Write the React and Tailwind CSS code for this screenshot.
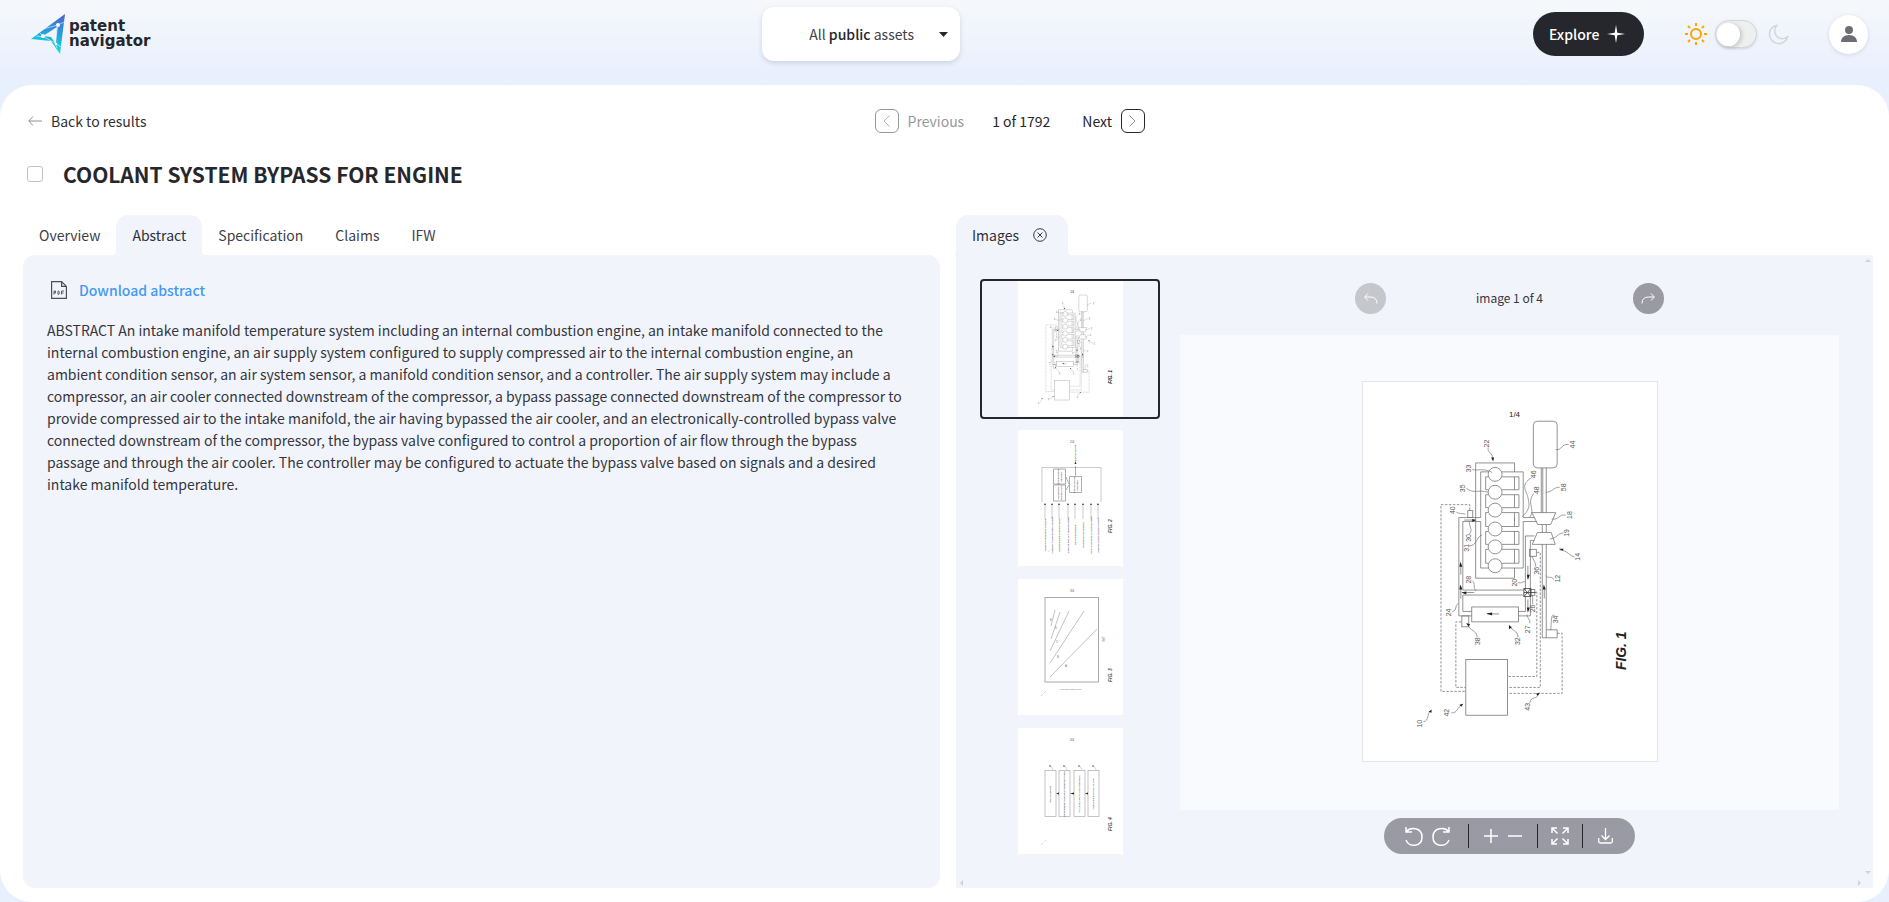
import React, { useState } from "react";

const TABS = ["Overview", "Abstract", "Specification", "Claims", "IFW"];

const ABSTRACT =
  "ABSTRACT An intake manifold temperature system including an internal combustion engine, an intake manifold connected to the internal combustion engine, an air supply system configured to supply compressed air to the internal combustion engine, an ambient condition sensor, an air system sensor, a manifold condition sensor, and a controller. The air supply system may include a compressor, an air cooler connected downstream of the compressor, a bypass passage connected downstream of the compressor to provide compressed air to the intake manifold, the air having bypassed the air cooler, and an electronically-controlled bypass valve connected downstream of the compressor, the bypass valve configured to control a proportion of air flow through the bypass passage and through the air cooler. The controller may be configured to actuate the bypass valve based on signals and a desired intake manifold temperature.";

const CYLINDERS = [93, 111, 129, 148, 166, 185];

// [text, x, y] of the reference numerals in figure 1
const NUMERALS = [
  ["22", 125, 62], ["33", 107, 87], ["35", 101, 107], ["40", 91, 129],
  ["30", 107, 157], ["31", 105, 167], ["46", 172, 93], ["48", 175, 109],
  ["44", 211, 63], ["58", 202, 106], ["18", 208, 134], ["19", 205, 152],
  ["14", 216, 176], ["28", 107, 199], ["24", 87, 232], ["38", 116, 261],
  ["32", 156, 261], ["20", 153, 202], ["36", 175, 190], ["26", 171, 228],
  ["27", 166, 249], ["12", 196, 198], ["34", 194, 239], ["42", 85, 333],
  ["10", 57, 344], ["43", 166, 327],
];

// Curved leader lines between the numerals and the parts
const LEADERS =
  "M126 66c-1 5 4 5 5 11M110 88c5 2 10-2 20 3M104 107c8 6 12 1 22 4M94 131c3 2 5 1 9 2M107 153c4-4 0-7 0-12M107 165c8 0 7-10 13-11M170 96c-12 8-6 12-4 20c2 9 2 12-6 20M172 112c-8 10 2 16-4 24M207 63c-8-1-6 6-13 5M198 106c-7 0-7 5-14 5M204 134c-7-1-6 5-14 4M202 152c-6 0-7 6-14 6M213 176c-6-1-6-6-15-7M110 200c4 3 0 8 4 10M90 231c5-1 2-6 6-8M115 257c-1-8-7-5-10-14M156 257c0-7-6-6-9-12M156 202c4 1 4-1 7-1M174 186c0-4-2-6-4-11M171 224c-1-4 1-6-1-10M168 243c1-4-3-5-3-9M192 199c-3-5-5 0-8-4M193 235c-4-2-3 5-4 15M89 333c6 1 6-6 11-8M61 342c6-1 3-9 8-12M168 323c1-7 7-3 9-9";

const ARROWS =
  "M131 80l-2-4h3zM114 139l-4-1v3zM98 181l-1 5h3zM98 204l-1 5h3zM99 212l5-1v3zM124 233l6-1v3zM166 199l-1-5h3zM166 232l-1-5h3zM182 204l-1 5h3zM197 168l5 0l-1 2zM104 243l4 1l-2 2zM147 245l3 2l-3 2zM101 324l-4 1l2 2zM69 330l-3 2l3 1zM178 313l-4 1l2 2z";

function FigureOne({ className }) {
  return (
    <svg viewBox="0 0 296 382" className={className} role="img" aria-label="Figure 1">
      <rect width="296" height="382" fill="#fff" />
      <g fill="none" stroke="#777" strokeWidth="0.8">
        <rect x="171.5" y="39.5" width="24" height="47" rx="4" />
        <path d="M179.5 86.5v45M181 86.5v45M184.5 86.5v45M170 131.5h24l-5 12h-13zM180.5 143.5v8M184.5 143.5v8M175.5 151.5h14l4 12h-23zM180.5 163.5v94h4v-94M184.5 249.5h11v8h-11" />
        <rect x="113.5" y="81.5" width="39" height="116" />
        {/* intake and exhaust manifolds */}
        <path fill="#fff" d="M118.5 136.5v-46h42.8v46h11M118.5 140.5v46.8h42.8v-46.8h14" />
        {CYLINDERS.slice(0, -1).map((y, i) => (
          <path
            key={y}
            d={`M126 ${y + 2.5}h-2.5V${CYLINDERS[i + 1] - 2.5}h2.5M140 ${y + 2.5}h17V${CYLINDERS[i + 1] - 2.5}h-17M152.5 ${y + 2.5}V${CYLINDERS[i + 1] - 2.5}`}
          />
        ))}
        {CYLINDERS.map((y) => (
          <circle key={y} cx="133" cy={y} r="7" fill="#fff" />
        ))}
        <path d="M118.5 136.5h-22v99h13M118.5 140.5h-18v69h61M109.5 231h-9v-16.5h61M156.5 231h7v-15M156.5 235.5h12v-76h4M163.5 209v-54h9" />
        <rect x="109.5" y="226.5" width="47" height="15" />
        <rect x="105.5" y="129.5" width="5" height="7" />
        <rect x="167.5" y="168.5" width="7" height="7" />
        <rect x="99.5" y="235.5" width="7" height="11" />
        <rect x="103.5" y="279.5" width="42" height="56" />
        <rect x="169" y="209" width="4" height="6" />
        <path d="M162 208h7v8h-7zM162 208l7 8M169 208l-7 8M162 212h12" stroke="#333" />
        <path d="M98.5 194v-11M98.5 218v-12M112 212h-12M137 233.5h-12M166 185v13M166 219v12M182.5 218v-12M102 139h10" />
        <path
          strokeDasharray="2.5 1.5"
          d="M107.5 129v-5.5h-29v188h25M99 241.5h-5.5v66h10M174 211.5h1v85h-29M175 171.5h3.5v136h-33M195.5 253h5v60.5h-55"
        />
        <path d={LEADERS} strokeWidth="0.7" />
      </g>
      <path d={ARROWS} fill="#222" />
      <g fill="#555" fontSize="7" textAnchor="middle" className="font-['Liberation_Sans',sans-serif]">
        {NUMERALS.map(([n, x, y]) => (
          <text key={n} transform={`translate(${x + 2} ${y}) rotate(-90)`}>
            {n}
          </text>
        ))}
      </g>
      <g fill="#222" className="font-['Liberation_Sans',sans-serif]">
        <text x="147" y="35" fontSize="8">1/4</text>
        <text transform="translate(265 290) rotate(-90)" fontSize="14" fontWeight="bold" fontStyle="italic">
          FIG. 1
        </text>
      </g>
    </svg>
  );
}

function SheetLabels({ page }) {
  return (
    <g fill="#555" className="font-['Liberation_Sans',sans-serif]">
      <text x="52" y="13" fontSize="3">{page}/4</text>
      <text transform="translate(94 103) rotate(-90)" fontSize="5" fontWeight="bold" fontStyle="italic">
        FIG. {page}
      </text>
    </g>
  );
}

const INPUTS = [
  [27, "AMBIENT PRESSURE SENSOR"],
  [34, "AMBIENT TEMPERATURE SENSOR"],
  [41, "COMPRESSOR TEMPERATURE"],
  [50, "COOLER OUTLET TEMPERATURE"],
  [57, "AIR FLOW SENSOR"],
  [65, "MANIFOLD AIR SENSOR"],
  [73, "INTAKE MANIFOLD TEMPERATURE"],
  [80, "ENGINE SPEED SENSOR INPUTS"],
];

function FigureTwo({ className }) {
  return (
    <svg viewBox="0 0 105 136" className={className} role="img" aria-label="Figure 2">
      <rect width="105" height="136" fill="#fff" />
      <g fill="none" stroke="#aaa" strokeWidth="0.6">
        <path d="M24 37.5h59M24 37v35M83 37v35" />
        <path d="M35.5 39h12v15h-12zM35.5 55h12v16h-12zM51.5 46.5h12v16h-12zM57.5 46v-10M48 47l3 7M48 60l3-5" stroke="#777" />
        {INPUTS.map(([x]) => (
          <path key={x} d={`M${x} 89v-15`} />
        ))}
        <path d="M30 122l3-3" strokeDasharray="1 1" />
      </g>
      <path d="M57.5 31l-1 3h2z" fill="#333" />
      {INPUTS.map(([x]) => (
        <path key={x} d={`M${x} 73l-1 2h2z`} fill="#333" />
      ))}
      <g fill="#555" fontSize="2.2" textAnchor="middle" className="font-['Liberation_Sans',sans-serif] font-bold">
        {INPUTS.map(([x, label]) => (
          <text key={x} transform={`translate(${x + 1} 105) rotate(-90)`}>{label}</text>
        ))}
        <text transform="translate(58 23) rotate(-90)">BYPASS VALVE</text>
        <text transform="translate(41 47) rotate(-90)">TEMPERATURE</text>
        <text transform="translate(44 47) rotate(-90)">DESIRED</text>
        <text transform="translate(41 63) rotate(-90)">CONDITION</text>
        <text transform="translate(44 63) rotate(-90)">SENSOR MAP</text>
        <text transform="translate(57 55) rotate(-90)">BYPASS VALVE</text>
        <text transform="translate(60 55) rotate(-90)">CONTROL</text>
      </g>
      <SheetLabels page={2} />
    </svg>
  );
}

function FigureThree({ className }) {
  return (
    <svg viewBox="0 0 105 136" className={className} role="img" aria-label="Figure 3">
      <rect width="105" height="136" fill="#fff" />
      <rect x="27" y="18.5" width="53.5" height="84.5" fill="none" stroke="#aaa" />
      <g fill="none" stroke="#999" strokeWidth="0.6">
        <path d="M32 98l47-48M32 84l34-52M32 72l19-40M33 60l9-27M33 47l4-16" />
        <path d="M23 117l5-5" strokeDasharray="1 1" />
      </g>
      <g fill="#777" fontSize="3" textAnchor="middle" className="font-['Liberation_Sans',sans-serif]">
        <text x="53" y="111" fontSize="2">ENGINE SPEED (RPM)</text>
        <text transform="translate(87 60) rotate(-90)">IMT</text>
        <text x="48" y="88">A</text>
        <text x="40" y="79">B</text>
        <text x="39" y="64">C</text>
        <text x="38" y="50">D</text>
        <text x="33" y="42">E</text>
      </g>
      <SheetLabels page={3} />
    </svg>
  );
}

const STEPS = [
  [27, "READ INPUTS"],
  [41, "DETERMINE DESIRED TEMPERATURE"],
  [56, "CALCULATE VALVE POSITION"],
  [70, "ACTUATE BYPASS VALVE"],
];

function FigureFour({ className }) {
  return (
    <svg viewBox="0 0 105 126" className={className} role="img" aria-label="Figure 4">
      <rect width="105" height="126" fill="#fff" />
      {STEPS.map(([x, label]) => (
        <g key={x} className="font-['Liberation_Sans',sans-serif] font-bold">
          <rect x={x} y="42.5" width="11" height="46" fill="none" stroke="#aaa" strokeWidth="0.7" />
          <path d={`M${x + 8} 42l-2-4`} stroke="#aaa" strokeWidth="0.5" />
          <circle cx={x + 5} cy="38" r="0.9" fill="#888" />
          <text transform={`translate(${x + 6} 66) rotate(-90)`} fontSize="2.5" textAnchor="middle" fill="#555">
            {label}
          </text>
        </g>
      ))}
      <path d="M38 65.5l3-1v2zM52 65.5l4-1v2zM67 65.5l3-1v2z" fill="#222" />
      <path d="M23 117l5-5" stroke="#999" strokeWidth="0.5" strokeDasharray="1 1" />
      <SheetLabels page={4} />
    </svg>
  );
}

const FIGURES = [FigureOne, FigureTwo, FigureThree, FigureFour];

function Logo() {
  return (
    <a href="#" className="flex items-center w-[158px] gap-1">
      <svg width="34" height="40" viewBox="0 0 34 40" aria-hidden="true">
        <defs>
          <linearGradient id="logo" x1="0.8" y1="0" x2="0.6" y2="1">
            <stop offset="0" stopColor="#4f62cf" />
            <stop offset="0.45" stopColor="#2c9ad8" />
            <stop offset="1" stopColor="#08ecdf" />
          </linearGradient>
        </defs>
        <path fill="url(#logo)" fillRule="evenodd" d="M34 0L0 25l20 2l9 13zM26 13l-1 17l-5-7l-8-1z" />
        <path d="M5 22l8 1l11 6l2 5M12 15l15-4l6-3M27 11l-3 18M24 29l6 4M12 22L9 19" fill="none" stroke="#fff" strokeWidth="0.7" opacity="0.8" />
        <circle cx="27" cy="11" r="2" fill="#fff" />
        <circle cx="12" cy="22" r="2" fill="#fff" />
        <circle cx="25" cy="30" r="1.3" fill="#fff" />
      </svg>
      <span className="font-['DejaVu_Sans',sans-serif] font-bold text-[15px] leading-[15px] text-[#26272c]">
        patent
        <br />
        navigator
      </span>
    </a>
  );
}

function ThemeSwitch() {
  const [dark, setDark] = useState(false);
  return (
    <label className="flex items-center cursor-pointer">
      <svg width="22" height="22" viewBox="0 0 22 22" fill="none" stroke="#ffa500" strokeWidth="2" aria-hidden="true">
        <circle cx="11" cy="11" r="5" />
        <path d="M11 0v3M11 19v3M0 11h3M19 11h3M3 3l2 2M17 17l2 2M3 19l2-2M17 5l2-2" />
      </svg>
      <input
        type="checkbox"
        role="switch"
        aria-label="Dark theme"
        className="peer sr-only"
        checked={dark}
        onChange={(e) => setDark(e.target.checked)}
      />
      <span className="ml-2 mr-[11px] flex items-center w-[42px] h-7 rounded-full border border-[#d5d6da] bg-[#eeefef] px-px shadow-sm peer-checked:justify-end">
        <span className="size-[23px] rounded-full bg-white shadow-[2px_1px_4px_rgba(0,0,0,0.18)]" />
      </span>
      <svg width="21" height="21" viewBox="0 0 21 21" fill="none" stroke="#d3d5dd" strokeWidth="1.5" aria-hidden="true">
        <path d="M9 1.2A9.3 9.3 0 1 0 19.8 12.5A7.3 7.3 0 0 1 9 1.2z" strokeLinejoin="round" />
      </svg>
    </label>
  );
}

function Header() {
  return (
    <header className="flex items-start justify-between h-[85px] pl-[31px] pr-[21px]">
      <div className="pt-[14px]">
        <Logo />
      </div>
      <button className="mt-[7px] flex items-center justify-end w-[198px] h-[54px] rounded-xl bg-white pr-3 shadow-[0_2px_5px_rgba(60,70,100,0.18)] cursor-pointer text-[#404148]">
        <span>
          All <b className="font-medium text-[#26272c]">public</b> assets
        </span>
        <svg className="ml-[25px]" width="9" height="5" viewBox="0 0 9 5" aria-hidden="true">
          <path d="M0 0h9L4.5 5z" fill="#26272c" />
        </svg>
      </button>
      <div className="flex items-center pt-3">
        <button className="flex items-center gap-2 h-11 w-[111px] pl-4 rounded-full bg-[#26272c] text-white font-medium cursor-pointer">
          Explore
          <svg width="18" height="18" viewBox="0 0 20 20" aria-hidden="true">
            <path d="M10 0l1.5 8.5L20 10l-8.5 1.5L10 20l-1.5-8.5L0 10l8.5-1.5z" fill="#fff" />
          </svg>
        </button>
        <div className="ml-[41px] mr-10">
          <ThemeSwitch />
        </div>
        <button
          aria-label="Account"
          className="flex items-center justify-center size-[39px] rounded-full bg-white shadow-[0_1px_4px_rgba(60,70,100,0.15)] cursor-pointer"
        >
          <svg width="16" height="17" viewBox="0 0 16 17" fill="#6c6d75" aria-hidden="true">
            <circle cx="8" cy="4" r="4" />
            <path d="M0 16c0-4 3-7 8-7s8 3 8 7z" />
          </svg>
        </button>
      </div>
    </header>
  );
}

function Pager() {
  return (
    <nav className="flex items-center mx-auto text-[#26272c]">
      <button disabled className="flex items-center gap-[9px] text-[#97989c]">
        <span className="flex items-center justify-center size-6 rounded-md border border-[#97989c]">
          <svg width="7" height="12" viewBox="0 0 7 12" fill="none" stroke="#b5b6ba" aria-hidden="true">
            <path d="M6.5 0.5L1 6l5.5 5.5" />
          </svg>
        </span>
        Previous
      </button>
      <span className="ml-7 mr-8">1 of 1792</span>
      <button className="flex items-center gap-[9px] cursor-pointer">
        Next
        <span className="flex items-center justify-center size-6 rounded-md border border-[#26272c]">
          <svg width="7" height="12" viewBox="0 0 7 12" fill="none" stroke="#8d8e95" aria-hidden="true">
            <path d="M0.5 0.5L6 6L0.5 11.5" />
          </svg>
        </span>
      </button>
    </nav>
  );
}

function PdfIcon() {
  return (
    <svg width="16" height="18" viewBox="0 0 16 18" fill="none" stroke="#4d4e55" strokeWidth="1.2" aria-hidden="true">
      <path d="M0.6 0.6h10l4.8 4.8v12H0.6zM10.6 0.6v4.8h4.8" />
      <path d="M3 13.5v-3.5h1.5v2H3M7 10v3.5c2 0 2-3.5 0-3.5M10.5 13.5V10h2.5M10.5 12h2" strokeWidth="0.9" />
    </svg>
  );
}

// Small curves where the open tab runs into its panel
function TabFlares() {
  return (
    <>
      <svg className="absolute bottom-0 -left-1" width="4" height="4" fill="#f1f4fb" aria-hidden="true">
        <path d="M4 0v4H0q4 0 4-4z" />
      </svg>
      <svg className="absolute bottom-0 -right-1" width="4" height="4" fill="#f1f4fb" aria-hidden="true">
        <path d="M0 0v4h4Q0 4 0 0z" />
      </svg>
    </>
  );
}

function AbstractPanel() {
  const [active, setActive] = useState("Abstract");
  return (
    <section className="flex flex-col flex-1 min-w-0">
      <div role="tablist" className="flex">
        {TABS.map((tab) => (
          <button
            key={tab}
            role="tab"
            aria-selected={tab === active}
            onClick={() => setActive(tab)}
            className={
              tab === active
                ? "relative h-10 px-4 rounded-t-xl bg-[#f1f4fb] text-[#303138] cursor-pointer"
                : "h-10 px-4 text-[#404148] cursor-pointer"
            }
          >
            {tab}
            {tab === active && <TabFlares />}
          </button>
        ))}
      </div>
      <div className="flex-1 rounded-xl bg-[#f1f4fb] pt-6 pl-6 pr-8">
        <a href="#" className="flex items-center gap-3 pl-1 font-medium text-[#4499f5]">
          <PdfIcon />
          Download abstract
        </a>
        <p className="mt-[18px] text-[#36373e]">{ABSTRACT}</p>
      </div>
    </section>
  );
}

function Toolbar() {
  const divider = <span className="w-px h-6 bg-[#26272c]" />;
  return (
    <div className="mt-2 mx-auto flex items-center h-9 rounded-full bg-[#9a9aa4] pl-[21px] pr-[22px]">
      <button aria-label="Rotate left" className="cursor-pointer">
        <svg width="18" height="21" viewBox="0 0 18 21" fill="none" stroke="#fff" strokeWidth="1.5" aria-hidden="true">
          <path d="M1 1v5h6M1.5 5.5C5 1 17 1 17 11c0 10-13 11-16 3" />
        </svg>
      </button>
      <button aria-label="Rotate right" className="ml-[9px] mr-[18px] cursor-pointer">
        <svg width="18" height="21" viewBox="0 0 18 21" fill="none" stroke="#fff" strokeWidth="1.5" aria-hidden="true">
          <path d="M17 1v5h-6M16.5 5.5C13 1 1 1 1 11c0 10 13 11 16 3" />
        </svg>
      </button>
      {divider}
      <button aria-label="Zoom in" className="ml-[15px] mr-[10px] cursor-pointer">
        <svg width="14" height="14" viewBox="0 0 14 14" stroke="#fff" strokeWidth="1.5" aria-hidden="true">
          <path d="M7 0v14M0 7h14" />
        </svg>
      </button>
      <button aria-label="Zoom out" className="mr-[15px] cursor-pointer">
        <svg width="14" height="14" viewBox="0 0 14 14" stroke="#fff" strokeWidth="1.5" aria-hidden="true">
          <path d="M0 7h14" />
        </svg>
      </button>
      {divider}
      <button aria-label="Full screen" className="mx-[13px] cursor-pointer">
        <svg width="18" height="18" viewBox="0 0 18 18" fill="none" stroke="#fff" strokeWidth="1.5" aria-hidden="true">
          <path d="M1 6V1h5M1 1l5.5 5.5M12 1h5v5M17 1l-5.5 5.5M17 12v5h-5M17 17l-5.5-5.5M6 17H1v-5M1 17l5.5-5.5" />
        </svg>
      </button>
      {divider}
      <button aria-label="Download image" className="ml-[15px] cursor-pointer">
        <svg width="15" height="16" viewBox="0 0 15 16" fill="none" stroke="#fff" strokeWidth="1.3" aria-hidden="true">
          <path d="M7.5 0v11M3.5 7.5l4 4l4-4M0.7 10v3.5q0 1.5 1.5 1.5h10.6q1.5 0 1.5-1.5V10" />
        </svg>
      </button>
    </div>
  );
}

function ImagesPanel() {
  const [current, setCurrent] = useState(0);
  const Current = FIGURES[current];

  return (
    <section className="flex flex-col flex-1 min-w-0">
      <div className="relative flex items-center self-start h-10 w-28 pl-4 rounded-t-xl bg-[#f1f4fb] text-[#303138]">
        Images
        <button aria-label="Close images" className="ml-[14px] cursor-pointer">
          <svg width="14" height="14" viewBox="0 0 14 14" fill="none" stroke="#36373e" aria-hidden="true">
            <circle cx="7" cy="7" r="6.3" />
            <path d="M4.5 4.5l5 5M9.5 4.5l-5 5" />
          </svg>
        </button>
        <TabFlares />
      </div>
      <div className="relative flex flex-1 gap-5 bg-[#f1f4fb] pl-6 pr-[34px] pt-6">
        <div className="flex flex-col items-center shrink-0 w-[180px]">
          {FIGURES.map((Figure, i) => (
            <button
              key={i}
              onClick={() => setCurrent(i)}
              className={
                i === current
                  ? "flex justify-center w-full mb-[11px] rounded-sm border-2 border-[#26272c] cursor-pointer"
                  : "mb-[13px] cursor-pointer"
              }
            >
              <Figure className="block w-[105px]" />
            </button>
          ))}
        </div>
        <div className="flex flex-col flex-1">
          <div className="flex items-center justify-center gap-[90px] h-14 pb-[18px]">
            <button
              aria-label="Previous image"
              className="flex items-center justify-center size-[31px] rounded-full bg-[#c5c7cd]"
              disabled={current === 0}
              onClick={() => setCurrent(current - 1)}
            >
              <svg width="14" height="11" viewBox="0 0 14 11" fill="none" stroke="#fff" aria-hidden="true">
                <path d="M4 0.5L0.7 4L4 7.5M1 4h5.5q6.5 0 6.5 6.5" />
              </svg>
            </button>
            <span className="text-xs text-[#36373e]">image {current + 1} of 4</span>
            <button
              aria-label="Next image"
              className="flex items-center justify-center size-[31px] rounded-full bg-[#9a9aa4] cursor-pointer"
              disabled={current === 3}
              onClick={() => setCurrent(current + 1)}
            >
              <svg width="14" height="11" viewBox="0 0 14 11" fill="none" stroke="#fff" aria-hidden="true">
                <path d="M10 0.5L13.3 4L10 7.5M13 4H7.5Q1 4 1 10.5" />
              </svg>
            </button>
          </div>
          <div className="flex justify-center bg-[#f9fafe] pt-[46px] pb-12">
            <Current className="block w-[296px] border border-[#e4e5e9]" />
          </div>
          <Toolbar />
        </div>
        <svg className="absolute top-1 right-[2px]" width="6" height="3" fill="#cfd2da" aria-hidden="true">
          <path d="M0 3L3 0l3 3z" />
        </svg>
        <svg className="absolute bottom-[14px] right-[2px]" width="6" height="3" fill="#cfd2da" aria-hidden="true">
          <path d="M0 0l3 3l3-3z" />
        </svg>
        <svg className="absolute bottom-[2px] right-3" width="3" height="6" fill="#cfd2da" aria-hidden="true">
          <path d="M0 0l3 3l-3 3z" />
        </svg>
        <svg className="absolute bottom-[2px] left-1" width="3" height="6" fill="#cfd2da" aria-hidden="true">
          <path d="M3 0L0 3l3 3z" />
        </svg>
      </div>
    </section>
  );
}

const App = () => {
  const [selected, setSelected] = useState(false);

  return (
    <div className="flex flex-col min-h-screen bg-[#e9f0fd] bg-linear-to-b from-[#f6f8fb] via-[#e8effd] via-[80px] to-[#e9f0fd] font-['Noto_Sans_CJK_SC',sans-serif] text-[14px] leading-[22px]">
      <Header />
      <main className="flex flex-col flex-1 rounded-[32px] bg-white pl-[23px] pr-4 pt-6 pb-[14px]">
        <div className="flex items-center h-6">
          <a href="#" className="flex items-center gap-[9px] pl-[5px] text-[#303138]">
            <svg width="14" height="10" viewBox="0 0 14 10" fill="none" stroke="#8d8e95" aria-hidden="true">
              <path d="M5 0.5L0.7 5L5 9.5M1 5h13" />
            </svg>
            Back to results
          </a>
          <Pager />
        </div>
        <div className="flex items-center gap-5 mt-[25px] pl-1">
          <input
            id="asset"
            type="checkbox"
            checked={selected}
            onChange={(e) => setSelected(e.target.checked)}
            className="appearance-none size-4 rounded-[3px] border border-[#c0c0d0] checked:bg-[#4499f5]"
          />
          <h1 className="text-[21px] leading-8 font-bold text-[#26272c]">
            <label htmlFor="asset">COOLANT SYSTEM BYPASS FOR ENGINE</label>
          </h1>
        </div>
        <div className="flex flex-1 gap-4 mt-[25px]">
          <AbstractPanel />
          <ImagesPanel />
        </div>
      </main>
    </div>
  );
};

export default App;
